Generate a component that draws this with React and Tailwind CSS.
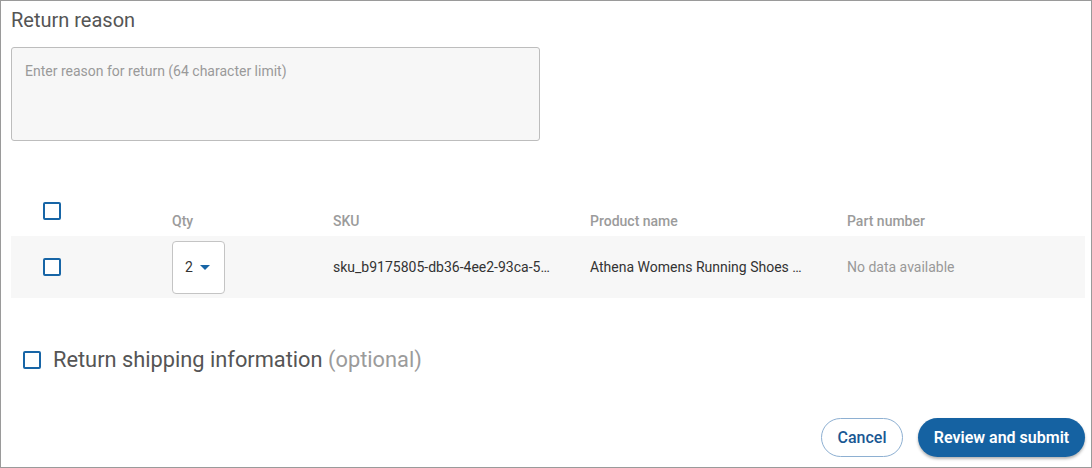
import React from "react";

function Box({ className = "" }) {
  return (
    <span
      className={`block w-[18px] h-[18px] border-2 border-[#1765a6] rounded-[2px] bg-white ${className}`}
    />
  );
}

export default function App() {
  return (
    <div
      className="w-[1092px] h-[468px] border border-[#9a9a9a] bg-white flex flex-col pl-[10px] pr-[6px] pt-[5px]"
      style={{ fontFamily: "Roboto, 'Liberation Sans', sans-serif" }}
    >
      <h1 className="text-[20px] leading-[28px] text-[#555555] font-normal">Return reason</h1>
      <div className="mt-[13px] w-[529px] h-[94px] rounded-[3px] border border-[#bdbdbd] bg-[#f7f7f7] px-[13px] pt-[13px] text-[14px] leading-[20px] text-[#9a9a9a]">
        Enter reason for return (64 character limit)
      </div>

      <div className="mt-[49px] grid grid-cols-[161px_161px_257px_257px_1fr] h-[46px] items-end text-[14px] leading-[20px] font-medium text-[#9b9b9b]">
        <div className="pl-[32px] mb-[16px]">
          <Box />
        </div>
        <div className="pb-[5px]">Qty</div>
        <div className="pb-[5px]">SKU</div>
        <div className="pb-[5px]">Product name</div>
        <div className="pb-[5px]">Part number</div>
      </div>

      <div className="grid grid-cols-[161px_161px_257px_257px_1fr] h-[62px] items-center bg-[#f7f7f7] text-[14px] leading-[20px] text-[#333333]">
        <div className="pl-[32px]">
          <Box />
        </div>
        <div>
          <div className="w-[53px] h-[53px] rounded-[4px] border border-[#c4c4c4] bg-white flex items-center pl-[12px] gap-[7px]">
            <span className="text-[14px] text-[#333333]">2</span>
            <svg width="10" height="5" viewBox="0 0 10 5">
              <path d="M0 0 L10 0 L5 5 Z" fill="#1765a6" />
            </svg>
          </div>
        </div>
        <div className="whitespace-nowrap">sku_b9175805-db36-4ee2-93ca-5…</div>
        <div className="whitespace-nowrap">Athena Womens Running Shoes …</div>
        <div className="text-[#999999]">No data available</div>
      </div>

      <div className="mt-[48px] flex items-center pl-[12px] gap-[12px]">
        <Box />
        <span className="text-[21.8px] leading-[28px] text-[#555555]">
          Return shipping information <span className="text-[#9b9b9b]">(optional)</span>
        </span>
      </div>

      <div className="mt-[44px] flex justify-end gap-[15px]">
        <button className="w-[82px] h-[39px] rounded-full border border-[#8eb0d2] bg-white text-[16px] leading-[20px] font-medium text-[#1a5893]">
          Cancel
        </button>
        <button className="w-[167px] h-[39px] rounded-full bg-[#1562a2] text-[16px] leading-[20px] font-semibold text-white shadow-[0_2px_3px_rgba(0,0,0,0.3)]">
          Review and submit
        </button>
      </div>
    </div>
  );
}
